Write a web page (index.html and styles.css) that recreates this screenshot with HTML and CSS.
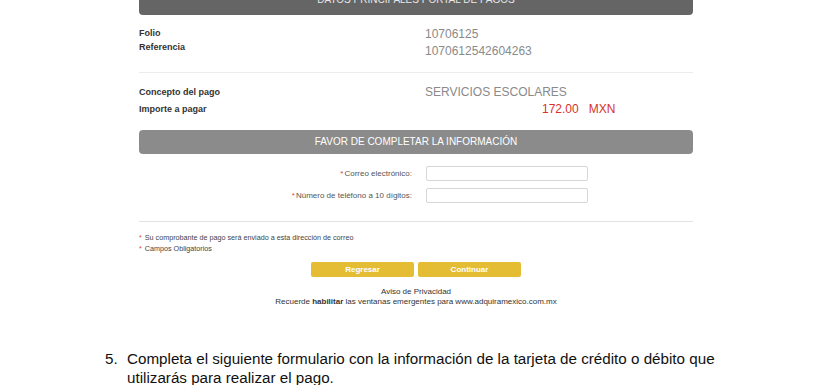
FILE: index.html
```html
<!DOCTYPE html>
<html lang="es">
<head>
    <meta charset="UTF-8">
    <meta name="viewport" content="width=device-width, initial-scale=1.0">
    <title>Portal de pagos</title>
    <link rel="stylesheet" href="styles.css">
</head>
<body>
    <div id="portal">
        <div class="bar bar-dark">DATOS PRINCIPALES PORTAL DE PAGOS</div>

        <div class="info first">
            <div class="labels">
                <div>Folio</div>
                <div>Referencia</div>
            </div>
            <div class="values">
                <div>10706125</div>
                <div>1070612542604263</div>
            </div>
        </div>

        <div class="divider"></div>

        <div class="info second">
            <div class="labels">
                <div>Concepto del pago</div>
                <div>Importe a pagar</div>
            </div>
            <div class="values">
                <div>SERVICIOS ESCOLARES</div>
                <div class="amount"><span>172.00</span><span>MXN</span></div>
            </div>
        </div>

        <div class="bar bar-light">FAVOR DE COMPLETAR LA INFORMACIÓN</div>

        <div id="fields">
            <div class="field">
                <label><span class="req">*</span>Correo electrónico:</label>
                <input type="text">
            </div>
            <div class="field">
                <label><span class="req">*</span>Número de teléfono a 10 dígitos:</label>
                <input type="text">
            </div>
        </div>

        <div class="divider bottom"></div>

        <div class="notes">
            <div><span class="req">*</span> Su comprobante de pago será enviado a esta dirección de correo</div>
            <div><span class="req">*</span> Campos Obligatorios</div>
        </div>

        <div class="actions">
            <button>Regresar</button>
            <button>Continuar</button>
        </div>

        <div class="footer">
            <div>Aviso de Privacidad</div>
            <div>Recuerde <b>habilitar</b> las ventanas emergentes para www.adquiramexico.com.mx</div>
        </div>
    </div>

    <div class="step">
        <span class="num">5.</span>
        <p>Completa el siguiente formulario con la información de la tarjeta de crédito o débito que utilizarás para realizar el pago.</p>
    </div>
</body>
</html>
```

FILE: styles.css
```css
body {
    font-family: 'Liberation Sans', Arial, sans-serif;
    background-color: #fff;
    margin: 0;
    overflow: hidden;
}
#portal {
    width: 554px;
    margin-left: 139px;
}
.bar {
    color: #fff;
    font-size: 10px;
    text-align: center;
    border-radius: 4px;
}
.bar-dark {
    background-color: #656565;
    height: 30px;
    line-height: 30px;
    margin-top: -15px;
    color: #e8e8e8;
}
.bar-light {
    background-color: #8b8b8b;
    height: 24px;
    line-height: 24px;
    margin-top: 12px;
}
.info {
    display: grid;
    grid-template-columns: 286px 1fr;
}
.info.first {
    margin-top: 11px;
}
.info.first .labels {
    line-height: 14px;
}
.info.second {
    margin-top: 11px;
}
.labels {
    font-size: 9px;
    font-weight: bold;
    color: #333;
    line-height: 17px;
}
.values {
    font-size: 12px;
    color: #8a8a8a;
    line-height: 17px;
}
.amount {
    color: #d8312b;
    padding-left: 117px;
}
.amount span + span {
    margin-left: 10px;
}
.divider {
    height: 1px;
    background-color: #ececec;
    margin-top: 12px;
}
.divider.bottom {
    margin-top: 18px;
    background-color: #e2e2e2;
}
#fields {
    margin-top: 12px;
    display: flex;
    flex-direction: column;
    gap: 7px;
}
.field {
    display: flex;
    align-items: center;
}
.field label {
    width: 273px;
    text-align: right;
    font-size: 8px;
    color: #555;
}
.field input {
    margin-left: 14px;
    width: 162px;
    height: 15px;
    box-sizing: border-box;
    border: 1px solid #d6d6d6;
    border-radius: 2px;
    padding: 0;
}
.req {
    color: #e2463d;
    margin-right: 1px;
}
.notes {
    margin-top: 10px;
    font-size: 7.2px;
    line-height: 11px;
    color: #444;
}
.actions {
    display: flex;
    justify-content: center;
    gap: 4px;
    margin-top: 8px;
}
.actions button {
    width: 103px;
    height: 15px;
    border: none;
    border-radius: 2px;
    background-color: #e4bd34;
    color: #fff;
    font-family: 'Liberation Sans', Arial, sans-serif;
    font-weight: bold;
    font-size: 8px;
    padding: 0;
}
.footer {
    margin-top: 10px;
    text-align: center;
    font-size: 8px;
    line-height: 10px;
    color: #333;
}
.step {
    display: flex;
    margin-top: 42px;
    margin-left: 105px;
    width: 640px;
    font-size: 15.2px;
    line-height: 19px;
    color: #111;
}
.step .num {
    width: 22px;
    flex-shrink: 0;
}
.step p {
    margin: 0;
}
```
